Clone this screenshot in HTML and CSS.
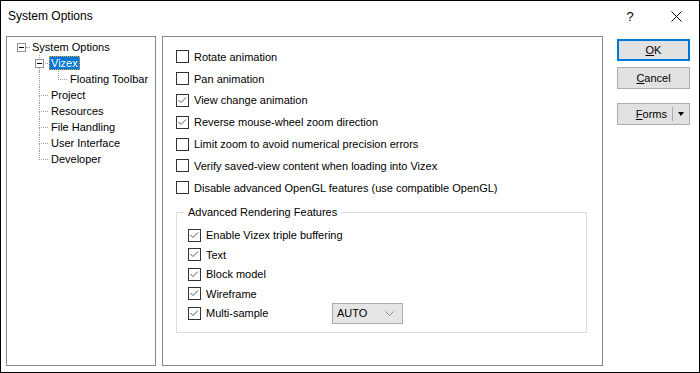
FILE: index.html
```html
<!DOCTYPE html>
<html lang="en">
<head>
    <meta charset="UTF-8">
    <title>System Options</title>
    <link rel="stylesheet" href="styles.css">
</head>
<body>
    <div class="dialog">
        <div class="titlebar">
            <span class="title">System Options</span>
            <span class="tb-btn help">?</span>
            <span class="tb-btn">
                <svg width="11" height="11" viewBox="0 0 11 11"><path d="M0.5 0.5 L10.5 10.5 M10.5 0.5 L0.5 10.5" stroke="#000" stroke-width="1" fill="none"/></svg>
            </span>
        </div>

        <div class="main">
            <!-- options tree -->
            <div class="tree">
                <div class="node root"><span class="expander"></span><span class="label">System Options</span></div>
                <div class="node lvl1"><span class="expander"></span><span class="label selected">Vizex</span></div>
                <div class="node lvl2"><span class="label">Floating Toolbar</span></div>
                <div class="node lvl1"><span class="label">Project</span></div>
                <div class="node lvl1"><span class="label">Resources</span></div>
                <div class="node lvl1"><span class="label">File Handling</span></div>
                <div class="node lvl1"><span class="label">User Interface</span></div>
                <div class="node lvl1 last"><span class="label">Developer</span></div>
            </div>

            <!-- Vizex page -->
            <div class="page">
                <div class="check"><span class="box"></span>Rotate animation</div>
                <div class="check"><span class="box"></span>Pan animation</div>
                <div class="check"><span class="box checked"><svg viewBox="0 0 11 11"><polyline points="1.5,5 4,7.5 9,2.5"/></svg></span>View change animation</div>
                <div class="check"><span class="box checked"><svg viewBox="0 0 11 11"><polyline points="1.5,5 4,7.5 9,2.5"/></svg></span>Reverse mouse-wheel zoom direction</div>
                <div class="check"><span class="box"></span>Limit zoom to avoid numerical precision errors</div>
                <div class="check"><span class="box"></span>Verify saved-view content when loading into Vizex</div>
                <div class="check"><span class="box"></span>Disable advanced OpenGL features (use compatible OpenGL)</div>

                <fieldset class="group">
                    <legend>Advanced Rendering Features</legend>
                    <div class="check"><span class="box checked"><svg viewBox="0 0 11 11"><polyline points="1.5,5 4,7.5 9,2.5"/></svg></span>Enable Vizex triple buffering</div>
                    <div class="check"><span class="box checked"><svg viewBox="0 0 11 11"><polyline points="1.5,5 4,7.5 9,2.5"/></svg></span>Text</div>
                    <div class="check"><span class="box checked"><svg viewBox="0 0 11 11"><polyline points="1.5,5 4,7.5 9,2.5"/></svg></span>Block model</div>
                    <div class="check"><span class="box checked"><svg viewBox="0 0 11 11"><polyline points="1.5,5 4,7.5 9,2.5"/></svg></span>Wireframe</div>
                    <div class="check">
                        <span class="box checked"><svg viewBox="0 0 11 11"><polyline points="1.5,5 4,7.5 9,2.5"/></svg></span>
                        <span class="check-text">Multi-sample</span>
                        <span class="select">AUTO <svg width="9" height="5" viewBox="0 0 9 5"><polyline points="0.5,0.5 4.5,4.5 8.5,0.5" fill="none" stroke="#888"/></svg></span>
                    </div>
                </fieldset>
            </div>

            <div class="buttons">
                <button class="btn default"><u>O</u>K</button>
                <button class="btn"><u>C</u>ancel</button>
                <button class="btn split">
                    <span class="split-label"><u>F</u>orms</span>
                    <span class="split-arrow"></span>
                </button>
            </div>
        </div>
    </div>
</body>
</html>
```

FILE: styles.css
```css
body {
    margin: 0;
    font-family: "Liberation Sans", Arial, sans-serif;
    font-size: 11px;
    color: #000;
}

.dialog {
    width: 700px;
    height: 373px;
    box-sizing: border-box;
    border: 1px solid #000;
    background: #fff;
    display: flex;
    flex-direction: column;
}

.titlebar {
    height: 30px;
    display: flex;
    align-items: center;
    padding-left: 7px;
    font-size: 12px;
}
.title {
    flex: 1;
}
.tb-btn {
    width: 46px;
    height: 30px;
    display: flex;
    align-items: center;
    justify-content: center;
}
.help {
    font-size: 13px;
}

.main {
    flex: 1;
    display: flex;
    padding: 5px 9px 6px 5px;
}

/* tree */
.tree {
    width: 150px;
    box-sizing: border-box;
    border: 1px solid #828790;
    padding-top: 2px;
}
.node {
    position: relative;
    height: 16px;
    display: flex;
    align-items: center;
}
.label {
    line-height: 12px;
    padding: 0 1px;
    border: 1px solid transparent;
    white-space: nowrap;
}
.root .label { margin-left: 23px; }
.lvl1 .label { margin-left: 42px; }
.lvl2 .label { margin-left: 61px; }
.label.selected {
    background: #0078d7;
    color: #fff;
    border: 1px dotted #e8a040;
}

.expander {
    position: absolute;
    top: 4px;
    width: 9px;
    height: 9px;
    box-sizing: border-box;
    border: 1px solid #919191;
    background: #fff;
    z-index: 1;
}
.expander::after {
    content: "";
    position: absolute;
    left: 1px;
    top: 3px;
    width: 5px;
    height: 1px;
    background: #000;
}
.root .expander { left: 10px; }
.lvl1 .expander { left: 28px; }

.root::after {
    content: "";
    position: absolute;
    left: 19px;
    top: 8px;
    width: 4px;
    border-top: 1px dotted #a0a0a0;
}
.lvl1::before {
    content: "";
    position: absolute;
    left: 32px;
    top: 0;
    width: 8px;
    height: 8px;
    border-left: 1px dotted #a0a0a0;
    border-bottom: 1px dotted #a0a0a0;
}
.lvl1::after {
    content: "";
    position: absolute;
    left: 32px;
    top: 8px;
    height: 8px;
    border-left: 1px dotted #a0a0a0;
}
.lvl1.last::after {
    display: none;
}
.lvl2::before {
    content: "";
    position: absolute;
    left: 51px;
    top: 0;
    width: 8px;
    height: 8px;
    border-left: 1px dotted #a0a0a0;
    border-bottom: 1px dotted #a0a0a0;
}
.lvl2::after {
    content: "";
    position: absolute;
    left: 32px;
    top: 0;
    height: 16px;
    border-left: 1px dotted #a0a0a0;
}

/* page */
.page {
    width: 441px;
    margin-left: 6px;
    box-sizing: border-box;
    border: 1px solid #828790;
    padding: 9px 15px 0 13px;
}
.check {
    display: flex;
    align-items: center;
    height: 21.8px;
    white-space: nowrap;
}
.box {
    width: 13px;
    height: 13px;
    box-sizing: border-box;
    border: 1px solid #333;
    background: #fff;
    margin-right: 5px;
    flex: none;
}
.box svg {
    display: block;
    width: 11px;
    height: 11px;
}
.box polyline {
    fill: none;
    stroke: #555;
    stroke-width: 1;
}

.group {
    margin: 7px 0 0 0;
    padding: 7px 7px 9px 7px;
    border: 1px solid #dcdcdc;
    min-width: 0;
}
.group legend {
    padding: 0 4px;
    line-height: 13px;
}
.group .check {
    height: 19.5px;
    margin-left: 4px;
}
.check-text {
    width: 126px;
}
.select {
    width: 71px;
    height: 21px;
    box-sizing: border-box;
    border: 1px solid #acacac;
    background: #e5e5e5;
    display: flex;
    align-items: center;
    justify-content: space-between;
    padding: 0 8px 0 4px;
}

/* buttons */
.buttons {
    width: 73px;
    margin-left: 14px;
    padding-top: 3px;
    display: flex;
    flex-direction: column;
}
.btn {
    height: 22px;
    box-sizing: border-box;
    border: 1px solid #adadad;
    background: #e1e1e1;
    font-family: inherit;
    font-size: 11px;
    color: #000;
    padding: 0;
    margin-bottom: 6px;
}
.btn.default {
    border: 2px solid #0078d7;
}
.btn.split {
    margin-top: 8px;
    display: flex;
    align-items: center;
}
.split-label {
    flex: 1;
    text-align: right;
    padding-right: 5px;
}
.split-arrow {
    width: 16px;
    height: 14px;
    border-left: 1px solid #adadad;
    display: flex;
    align-items: center;
    justify-content: center;
}
.split-arrow::after {
    content: "";
    border-left: 3.5px solid transparent;
    border-right: 3.5px solid transparent;
    border-top: 4px solid #000;
}
```
